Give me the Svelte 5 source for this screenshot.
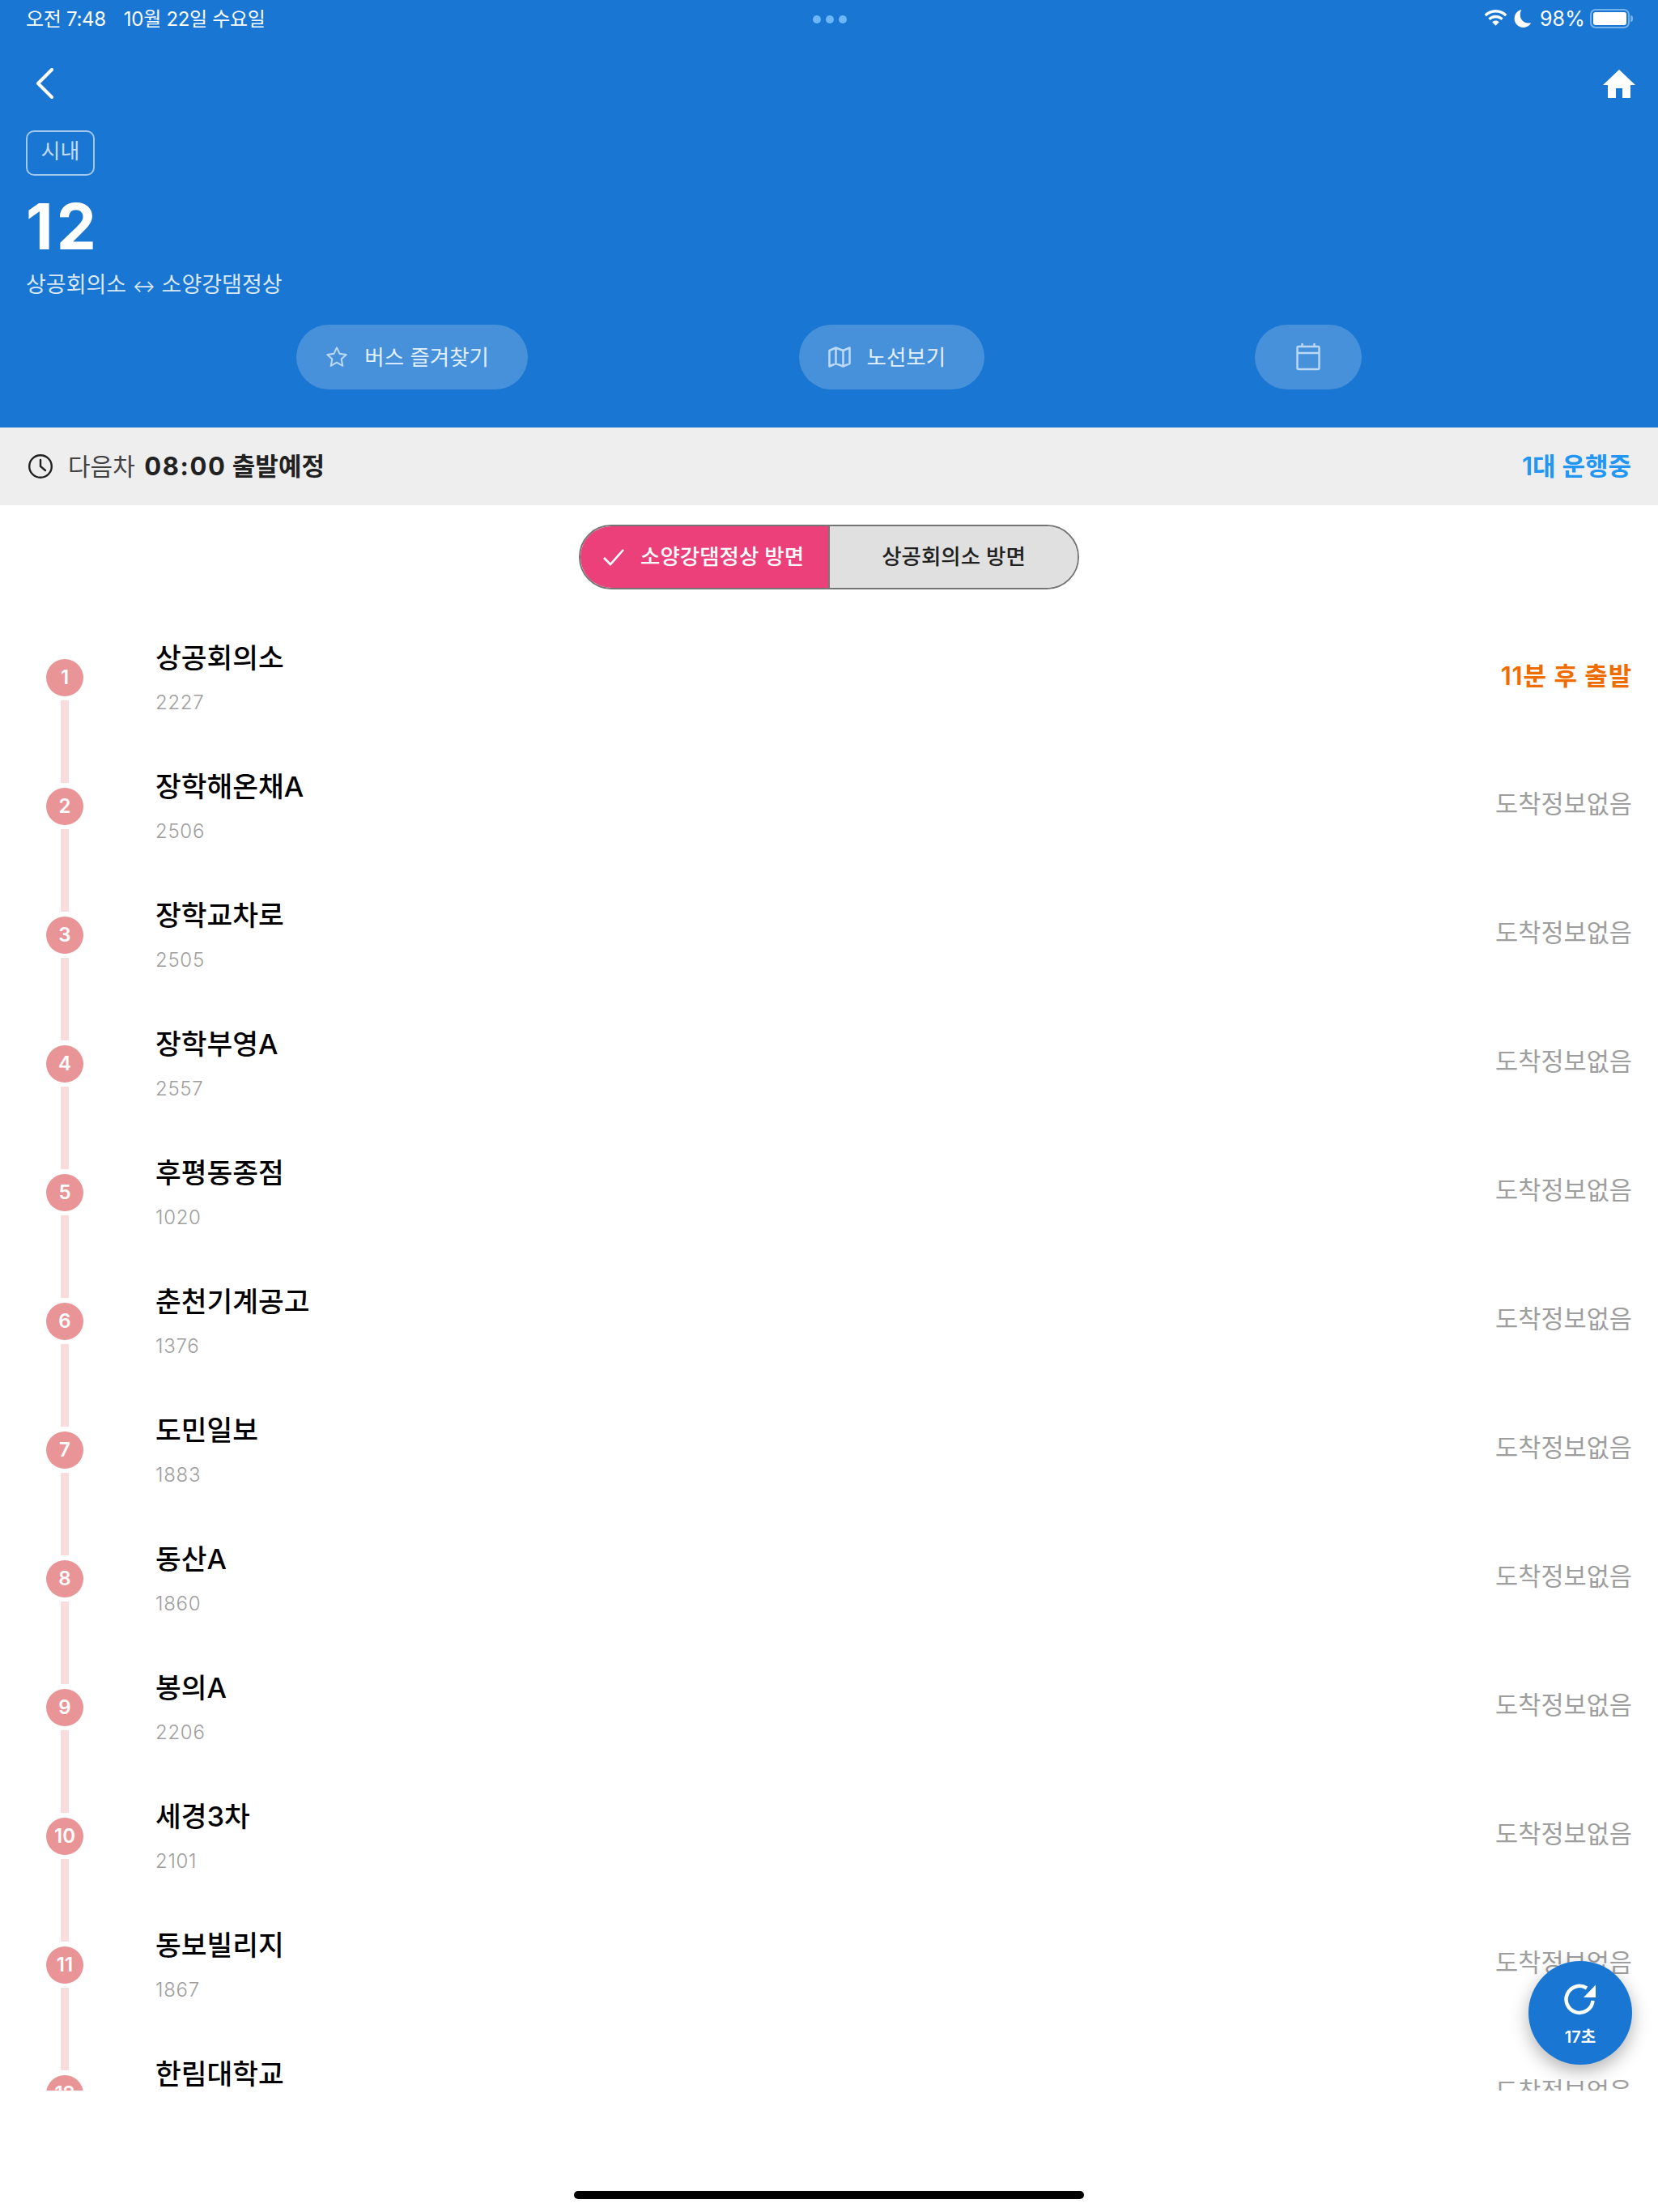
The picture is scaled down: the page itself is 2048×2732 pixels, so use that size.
<script lang="ts">
	const stops = [
		{ name: '상공회의소', code: '2227', arrival: '11분 후 출발', active: true },
		{ name: '장학해온채A', code: '2506' },
		{ name: '장학교차로', code: '2505' },
		{ name: '장학부영A', code: '2557' },
		{ name: '후평동종점', code: '1020' },
		{ name: '춘천기계공고', code: '1376' },
		{ name: '도민일보', code: '1883' },
		{ name: '동산A', code: '1860' },
		{ name: '봉의A', code: '2206' },
		{ name: '세경3차', code: '2101' },
		{ name: '동보빌리지', code: '1867' },
		{ name: '한림대학교', code: '1005' }
	];
</script>

<div class="screen">
	<header class="top">
		<div class="status">
			<div class="statusLeft">
				<span>오전 7:48</span>
				<span>10월 22일 수요일</span>
			</div>
			<div class="dots"><i></i><i></i><i></i></div>
			<div class="statusRight">
				<svg width="31" height="24" viewBox="0 0 28 22" fill="#fff">
					<path d="M14 4.2c4.1 0 7.8 1.6 10.6 4.2l2.1-2.2C23.3 3 18.9 1 14 1S4.7 3 1.3 6.2l2.1 2.2C6.2 5.800 9.900 4.200 14 4.200z" />
					<path d="M14 10.300c2.400 0 4.600.9 6.300 2.500l2.100-2.200C20.200 8.400 17.200 7.100 14 7.100s-6.200 1.300-8.400 3.500l2.100 2.200c1.700-1.600 3.900-2.500 6.300-2.500z" />
					<path d="M14 13.300c-1.500 0-2.900.6-3.900 1.600l3.900 4.100 3.900-4.100c-1-1-2.400-1.600-3.900-1.600z" />
				</svg>
				<svg class="moon" width="22" height="24" viewBox="0 0 20 22" fill="#fff">
					<path d="M8.500 1C3.900 1.900.5 5.900.5 11c0 5.500 4.500 10 10 10 3.800 0 7.100-2.100 8.800-5.300-1 .3-1.900.4-2.800.4-5.600 0-9.500-4.100-9.500-9.400 0-2.200.6-4 1.500-5.700z" />
				</svg>
				<span class="pct">98%</span>
				<div class="battery"><div class="level"></div></div>
			</div>
		</div>

		<div class="nav">
			<svg width="26" height="38" viewBox="0 0 26 38" fill="none" stroke="#fff" stroke-width="4" stroke-linecap="round" stroke-linejoin="round">
				<path d="M21 2 4 19l17 17" />
			</svg>
			<svg width="40" height="35" viewBox="0 0 40 35" fill="#fff">
				<path d="M20 0 40 19h-6v16H24V23h-8v12H6V19H0z" />
			</svg>
		</div>

		<div class="info">
			<div class="badge">시내</div>
			<div class="number">12</div>
			<div class="route">상공회의소 <span class="arrow">↔</span> 소양강댐정상</div>
		</div>

		<div class="actions">
			<button class="pill fav">
				<svg width="28" height="28" viewBox="0 0 30 30" fill="none" stroke="#bbd8f5" stroke-width="2.200" stroke-linejoin="round">
					<path d="m15 2.500 3.800 8.100 8.700 1.100-6.400 6.100 1.700 8.800-7.800-4.400-7.800 4.400 1.700-8.800-6.400-6.100 8.700-1.100z" />
				</svg>
				<span>버스 즐겨찾기</span>
			</button>
			<button class="pill map">
				<svg width="28" height="28" viewBox="0 0 28 28" fill="none" stroke="#bbd8f5" stroke-width="2.600" stroke-linejoin="round">
					<path d="M1.500 6 9.500 2.500 18.500 6l8-3.500V22l-8 3.500L9.500 22l-8 3.500zM9.500 2.500V22M18.500 6v19.500" />
				</svg>
				<span>노선보기</span>
			</button>
			<button class="pill cal" aria-label="달력">
				<svg width="30" height="34" viewBox="0 0 30 34" fill="none" stroke="#bbd8f5" stroke-width="2.400">
					<rect x="1.500" y="4" width="27" height="28" rx="1.500" />
					<path d="M1.500 12h27M7.500 0v4M22.500 0v4" />
				</svg>
			</button>
		</div>
	</header>

	<div class="nextBar">
		<div class="next">
			<svg width="32" height="32" viewBox="0 0 32 32" fill="none" stroke="#212121" stroke-width="2.400" stroke-linecap="round">
				<circle cx="16" cy="16" r="13.800" />
				<path d="M16 8v8l6 5" />
			</svg>
			<span class="nextText">다음차 <b><span class="time">08:00</span> 출발예정</b></span>
		</div>
		<div class="running">1대 운행중</div>
	</div>

	<div class="toggleWrap">
		<div class="toggle">
			<div class="seg on">
				<svg width="28" height="24" viewBox="0 0 28 24" fill="none" stroke="#fff" stroke-width="2.600">
					<path d="m2 13 8 8L26 3" />
				</svg>
				<span>소양강댐정상 방면</span>
			</div>
			<div class="seg off"><span>상공회의소 방면</span></div>
		</div>
	</div>

	<div class="list">
		{#each stops as stop, i}
			<div class="row">
				<div class="circle">{i + 1}</div>
				<div class="stopText">
					<div class="name">{stop.name}</div>
					<div class="code">{stop.code}</div>
				</div>
				<div class="arrival" class:active={stop.active}>{stop.arrival ?? '도착정보없음'}</div>
			</div>
		{/each}
	</div>

	<div class="bottom"><div class="homeBar"></div></div>

	<button class="refresh">
		<svg width="40" height="40" viewBox="0 0 40 40" fill="none">
			<path d="M35.500 21A16.500 16.500 0 1 1 28 5.500" stroke="#fff" stroke-width="4.500" />
			<path d="M39 1.500V17H24z" fill="#fff" />
		</svg>
		<span>17초</span>
	</button>
</div>

<style>
	:global(body) {
		background: #fff;
	}
	.screen {
		position: relative;
		width: 2048px;
		height: 2732px;
		display: flex;
		flex-direction: column;
		overflow: hidden;
		background: #fff;
		font-family: Inter, 'Noto Sans CJK KR', sans-serif;
	}
	.top {
		background: #1976d2;
		height: 528px;
		box-sizing: border-box;
		color: #fff;
	}
	.status {
		height: 46px;
		display: grid;
		grid-template-columns: 1fr auto 1fr;
		align-items: center;
		padding: 0 30px 0 32px;
		font-size: 24px;
	}
	.statusLeft {
		display: flex;
		gap: 22px;
		letter-spacing: -0.3px;
		margin-bottom: 3px;
	}
	.dots {
		display: flex;
		gap: 6px;
		margin-top: 2px;
	}
	.dots i {
		width: 10px;
		height: 10px;
		border-radius: 50%;
		background: #6db8f8;
	}
	.statusRight {
		display: flex;
		justify-content: flex-end;
		align-items: center;
		margin-right: 1px;
	}
	.moon {
		margin-left: 7px;
	}
	.pct {
		margin-left: 10px;
		font-size: 25px;
		letter-spacing: 0.2px;
	}
	.battery {
		margin: 0 4px 0 6px;
		width: 49px;
		height: 24px;
		box-sizing: border-box;
		border: 2px solid #75b1ea;
		border-radius: 7px;
		padding: 2px;
		position: relative;
	}
	.battery::after {
		content: '';
		position: absolute;
		right: -6px;
		top: 6px;
		width: 3px;
		height: 8px;
		border-radius: 0 3px 3px 0;
		background: #75b1ea;
	}
	.level {
		height: 100%;
		background: #fff;
		border-radius: 3px;
	}
	.nav {
		display: flex;
		justify-content: space-between;
		align-items: center;
		padding: 38px 28px 0 43px;
	}
	.info {
		padding: 39px 32px 0;
	}
	.badge {
		box-sizing: border-box;
		width: 85px;
		height: 56px;
		border: 2px solid rgba(255, 255, 255, 0.6);
		border-radius: 10px;
		text-align: center;
		font-size: 26px;
		line-height: 48px;
		color: rgba(255, 255, 255, 0.75);
	}
	.number {
		margin-top: 25px;
		font-size: 78px;
		line-height: 76px;
		font-weight: 700;
		letter-spacing: 4px;
	}
	.route {
		margin-top: 16px;
		font-size: 27px;
		line-height: 36px;
		color: rgba(255, 255, 255, 0.85);
	}
	.arrow {
		font-size: 21px;
	}
	.actions {
		margin-top: 29px;
		padding: 0 32px;
		display: flex;
		justify-content: space-evenly;
	}
	.pill {
		height: 80px;
		border: 0;
		border-radius: 40px;
		background: rgba(255, 255, 255, 0.2);
		color: #e3f0fb;
		font: inherit;
		font-size: 26.5px;
		display: flex;
		align-items: center;
		gap: 20px;
		padding: 0 0 0 36px;
		box-sizing: border-box;
	}
	.pill span {
		padding-bottom: 3px;
	}
	.fav {
		width: 286px;
	}
	.map {
		width: 229px;
	}
	.cal {
		width: 132px;
		justify-content: center;
		padding: 0;
	}
	.nextBar {
		height: 96px;
		background: #eeeeee;
		display: flex;
		justify-content: space-between;
		align-items: center;
		padding: 0 33px 0 34px;
		font-size: 30px;
	}
	.next {
		display: flex;
		align-items: center;
		gap: 18px;
		color: #424242;
	}
	.nextText {
		padding-bottom: 6px;
	}
	.next b {
		margin-left: 3px;
		color: #212121;
		font-size: 31px;
		font-weight: 700;
	}
	.time {
		letter-spacing: 1.6px;
	}
	.running {
		color: #2196f3;
		font-size: 31px;
		font-weight: 600;
		padding-bottom: 6px;
	}
	.toggleWrap {
		height: 133px;
		box-sizing: border-box;
		padding-top: 24px;
		display: flex;
		justify-content: center;
	}
	.toggle {
		width: 618px;
		height: 80px;
		box-sizing: border-box;
		border: 2px solid #757575;
		border-radius: 40px;
		display: flex;
		overflow: hidden;
		font-size: 26.5px;
		font-weight: 500;
	}
	.seg {
		display: flex;
		align-items: center;
		height: 100%;
	}
	.seg span {
		padding-bottom: 5px;
	}
	.on {
		box-sizing: border-box;
		width: 308px;
		padding-left: 27px;
		background: #ec407a;
		color: #fff;
		gap: 19px;
		border-right: 2px solid #757575;
	}
	.off {
		flex: 1;
		justify-content: center;
		background: #e0e0e0;
		color: #212121;
	}
	.list {
		height: 1825px;
		overflow: hidden;
	}
	.row {
		height: 159px;
		display: flex;
		align-items: flex-start;
		padding: 0 32px 0 57px;
	}
	.circle {
		position: relative;
		flex: none;
		width: 46px;
		height: 46px;
		margin-top: 57px;
		border-radius: 50%;
		background: #e99598;
		color: #fff;
		font-size: 24px;
		font-weight: 600;
		line-height: 46px;
		text-align: center;
	}
	.circle::after {
		content: '';
		position: absolute;
		left: 18px;
		top: 51px;
		width: 10px;
		height: 102px;
		background: #fadcde;
	}
	.stopText {
		flex: 1;
		margin: 34px 0 0 89px;
	}
	.name {
		font-size: 34.5px;
		line-height: 44px;
		font-weight: 500;
		color: #000;
	}
	.code {
		margin-top: 18px;
		font-size: 24px;
		line-height: 30px;
		font-weight: 300;
		color: #9e9e9e;
		letter-spacing: 0.7px;
	}
	.arrival {
		margin-top: 55px;
		font-size: 30.6px;
		line-height: 44px;
		color: #9e9e9e;
	}
	.active {
		margin-top: 56px;
		color: #ef6c00;
		font-weight: 600;
		font-size: 31px;
		letter-spacing: 0.8px;
	}
	.bottom {
		flex: 1;
		display: flex;
		justify-content: center;
		align-items: flex-end;
		padding-bottom: 16px;
	}
	.homeBar {
		width: 630px;
		height: 10px;
		border-radius: 5px;
		background: #000;
	}
	.refresh {
		position: absolute;
		left: 1888px;
		top: 2422px;
		width: 128px;
		height: 128px;
		border: 0;
		border-radius: 50%;
		background: #1976d2;
		box-shadow: 0 8px 22px rgba(0, 0, 0, 0.3);
		color: #fff;
		font: inherit;
		font-size: 20px;
		line-height: 24px;
		font-weight: 600;
		display: flex;
		flex-direction: column;
		align-items: center;
		padding: 28px 0 0;
		gap: 14px;
		box-sizing: border-box;
	}
</style>
